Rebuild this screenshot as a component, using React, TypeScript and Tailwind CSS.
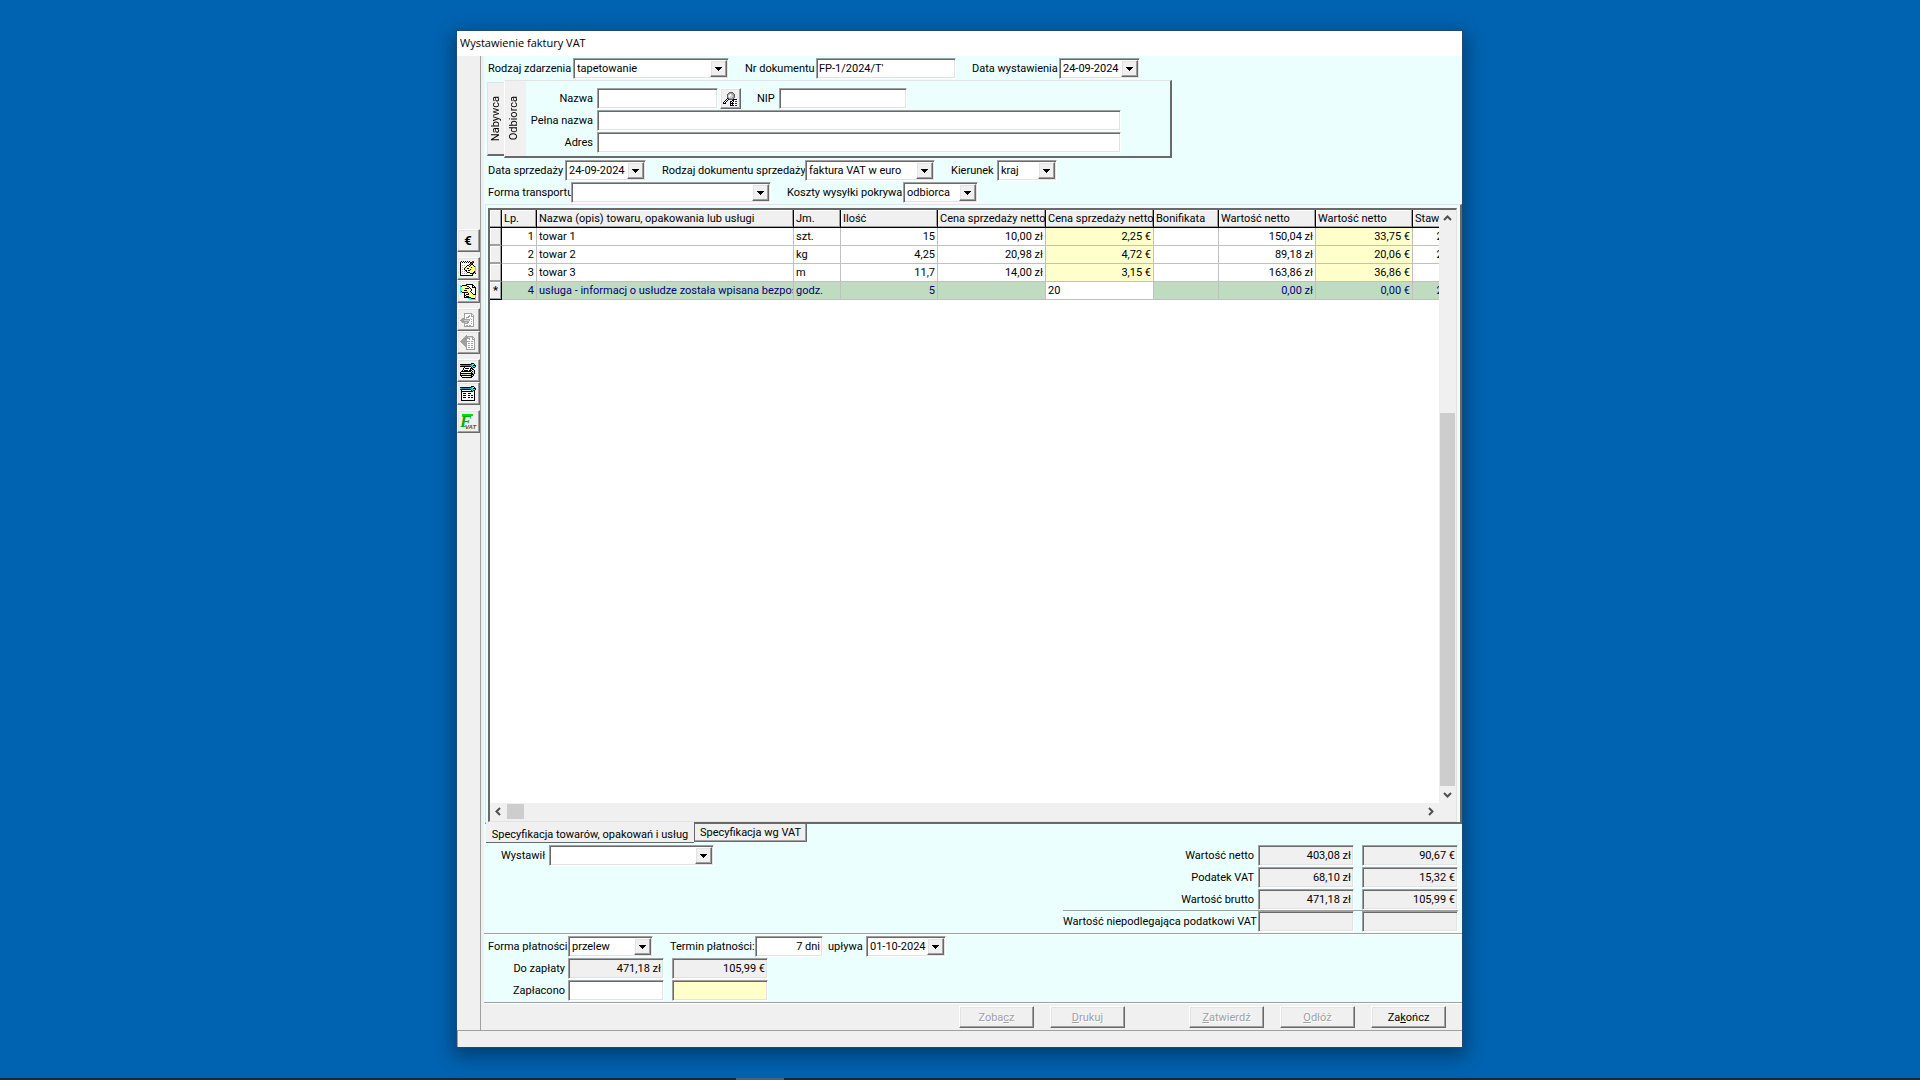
import type { ReactNode } from 'react'

const COLORS: Record<string, string> = {
  K: '#000000',
  W: '#ffffff',
  C: '#00ffff',
  Y: '#ffff80',
  O: '#c0a020',
  R: '#a02020',
  G: '#a0a0a0',
  L: '#d0d0d0',
  B: '#2020c0',
  D: '#606060',
  T: '#2090b0',
}

const NOTE = [
  '.K.K.K.K.K..RR..',
  'KWKWKWKWKWKKRK..',
  'KWWWWWWWWWKRK...',
  'KWWWWWWWWKOKK...',
  'KWCWCWWKKYKYYK..',
  'KWWWWWKYYKYYYYKC',
  'KWCWWKYYYYYKYYYC',
  'KWWWKYYKKYYYYYYC',
  'KWCWKYYYYYKYYYYC',
  'KWWWWKKYKKYYYYYC',
  'KWCWCWKYYYYYYYKC',
  'KWWWWWWKKKYYYKKC',
  'KWCWCWCWWWKKKK.K',
  'KWWWWWWWWWWWK...',
  'KKKKKKKKKKKKK...',
]

const HAND = [
  '......KKKKKKK...',
  'C.KKKKKWWWWWKK..',
  'CKYYYYYKKWWWKWK.',
  'CYYYYYYYYKWWKKKK',
  'CYYYYKKKKYKWWWWK',
  'CYYYYYYYYYYKWWWK',
  'CYYYKKKYYYYKWWWK',
  'CKYYYYYYYYKWWWWK',
  'C.KKKKKKYYYKWWWK',
  '....KWWWKYYYKWWK',
  '....KWKKKYYYYKKK',
  '....KKYYYYYYYYYC',
  '....KWKKKYYYYYYC',
  '....KKKKKKKYYYYC',
  '........CCCKKKKC',
  '.........CCCCCCC',
]

const IMPORT = [
  '....GGGGGGGG....',
  '....GWWWWWWGG...',
  '....GWWWWGWGWG..',
  '....GWWWGGWGGG..',
  '....GWGGGWWWWG..',
  '..GGGWLWWWLWWG..',
  '.GGGGGGGGGWGWG..',
  'GGGGLLLLLGWWWG..',
  '.GGGGGGGGWWGWG..',
  '..GGGLLGGWWWWG..',
  '....GGGGWWWGWG..',
  '....GWWWWWWWWG..',
  '....GWGGWGGWWG..',
  '....GGGGGGGGGG..',
]

const BACK = [
  '......G.........',
  '.....GGGGGGGG...',
  '....GGGGLLLLGG..',
  '...GGGGGGGWWGWG.',
  '..GGGGGWWGWWGGG.',
  '.GGGGGGWWWWWWWG.',
  'GGGGGGGGGGWGGWG.',
  '.GGGGGGWWWWWWWG.',
  '..GGGGGWGGWGGWG.',
  '...GGGGWWWWWWWG.',
  '....GGGWGGWGGWG.',
  '.....GGWWWWWWWG.',
  '......GWGGWGGWG.',
  '......GWWWWWWWG.',
  '......GGGGGGGGG.',
]

const PRINTER = [
  '...........KKK..',
  'KKKKKKKKKKKTC.K.',
  'CTTTTTTTTTCTCKKK',
  'KKKKKKKKKKKCTCCK',
  '....KWWWWWWKCKK.',
  '...KWKKKKWKKK...',
  '...KWWWWWWK.KK..',
  '..KWKKKKWKKKWLK.',
  '.KKKKKKKKKKWKLK.',
  'KWWWWWWWWWWKLLK.',
  'KKKKKKKKKKKKKLK.',
  'KLLLLLLYYLLKKK..',
  'KKKKKKKKKKKKLK..',
  '.KWWWWWWWWLKK...',
  '..KKKKKKKKKK....',
]

const LIST = [
  '...........KKK..',
  'KKKKKKKKKKKTC.K.',
  'CTTTTTTTTTCTCKKK',
  'KKKKKKKKKKKCTCCK',
  '.KWWWWWWWWWKCKK.',
  '.KKKKKKKKKKKKWK.',
  '.KWWWWWWWWWWWWK.',
  '.KWKKKWWKKKWWWK.',
  '.KWWWWWWWWWWWWK.',
  '.KWKKKWWKKWKKWK.',
  '.KWWWWWWWWWWWWK.',
  '.KWKKKWWKKWKKWK.',
  '.KWWWWWWWWWWWWK.',
  '.KWWWWWWWWWWWWK.',
  '.KKKKKKKKKKKKKK.',
]

const SEARCH = [
  '......DDDD......',
  '.....DGGGGD.....',
  '....DGLWLGGD....',
  '....DLWWLLGD....',
  '....DLWLLLGD....',
  '....DGLLLGGD....',
  '....KDGGGGD.....',
  '...KWKDDDDKKKK..',
  '..KWK....KKWWW..',
  '.KWK...KKWKWBB..',
  'KWK....KWKWWWW..',
  'KKK....KKKKWBB..',
  '.......KWKWWWW..',
  '.......KKKKWBB..',
]

function PixelIcon({ rows }: { rows: string[] }) {
  return (
    <svg width="16" height={rows.length} viewBox={`0 0 16 ${rows.length}`} shapeRendering="crispEdges" aria-hidden="true">
      {rows.flatMap((row, y) =>
        row.split('').map((c, x) =>
          c === '.' ? null : <rect key={`${x}-${y}`} x={x} y={y} width="1" height="1" fill={COLORS[c]} />,
        ),
      )}
    </svg>
  )
}

const SUNKEN =
  'border border-t-[#a0a0a0] border-l-[#a0a0a0] border-r-white border-b-white shadow-[inset_1px_1px_0_#696969,inset_-1px_-1px_0_#e3e3e3]'
const RAISED =
  'border border-t-white border-l-white border-r-[#696969] border-b-[#696969] shadow-[inset_-1px_-1px_0_#a0a0a0,inset_1px_1px_0_#e3e3e3]'

function Label({ id, width, children }: { id: string; width?: string; children: ReactNode }) {
  return (
    <label htmlFor={id} className={`shrink-0 pt-px whitespace-nowrap ${width ?? ''}`}>
      {children}
    </label>
  )
}

function Select({ id, width, value }: { id: string; width: string; value: string }) {
  return (
    <span className={`relative block h-[21px] shrink-0 bg-white ${SUNKEN} ${width}`}>
      <select id={id} defaultValue={value} className="block h-full w-full appearance-none bg-transparent pt-px pl-[3px] outline-none">
        <option value={value}>{value}</option>
      </select>
      <span className={`pointer-events-none absolute top-px right-px bottom-px flex w-[17px] items-center justify-center bg-[#f0f0f0] ${RAISED}`}>
        <svg width="7" height="4" viewBox="0 0 7 4" shapeRendering="crispEdges" aria-hidden="true">
          <path d="M0 0h7v1H0zM1 1h5v1H1zM2 2h3v1H2zM3 3h1v1H3z" />
        </svg>
      </span>
    </span>
  )
}

type FieldProps = { id: string; width: string; value?: string; bg?: string; right?: boolean; readOnly?: boolean; label?: string }

function Field({ id, width, value = '', bg = 'bg-white', right, readOnly, label }: FieldProps) {
  return (
    <input
      id={id}
      type="text"
      defaultValue={value}
      readOnly={readOnly}
      aria-label={label}
      className={`block h-[21px] px-[2px] pb-px outline-none ${right ? 'text-right' : ''} ${SUNKEN} ${bg} ${width}`}
    />
  )
}

function ToolButton({ label, disabled, children }: { label: string; disabled?: boolean; children: ReactNode }) {
  return (
    <button
      type="button"
      aria-label={label}
      disabled={disabled}
      className={`flex h-[23px] w-[23px] items-center justify-center bg-[#f0f0f0] pr-px ${RAISED}`}
    >
      {children}
    </button>
  )
}

function Toolbar() {
  return (
    <div role="toolbar" className="flex w-6 shrink-0 flex-col gap-[5px] border-r border-[#a0a0a0] pt-[173px]">
      <ToolButton label="Waluta">
        <span className="text-[13px] leading-4 font-bold">€</span>
      </ToolButton>
      <div>
        <ToolButton label="Edytuj pozycję"><PixelIcon rows={NOTE} /></ToolButton>
        <ToolButton label="Wybierz pozycję"><PixelIcon rows={HAND} /></ToolButton>
      </div>
      <div>
        <ToolButton label="Wczytaj dokument" disabled><PixelIcon rows={IMPORT} /></ToolButton>
        <ToolButton label="Cofnij dokument" disabled><PixelIcon rows={BACK} /></ToolButton>
      </div>
      <div>
        <ToolButton label="Ustawienia wydruku"><PixelIcon rows={PRINTER} /></ToolButton>
        <ToolButton label="Ustawienia listy"><PixelIcon rows={LIST} /></ToolButton>
      </div>
      <ToolButton label="Faktura VAT">
        <svg width="18" height="17" viewBox="0 0 18 17" aria-hidden="true">
          <path d="M3 1h11v2H3z" fill="#00e000" />
          <text x="1" y="14" fontSize="17" fontWeight="bold" fontStyle="italic" fontFamily="Liberation Serif, serif" fill="#00b000">F</text>
          <text x="6" y="16" fontSize="6" fontWeight="bold" fontStyle="italic" fontFamily="Liberation Sans, sans-serif" fill="#705000">VAT</text>
        </svg>
      </ToolButton>
    </div>
  )
}

function PartyPanel() {
  return (
    <div className="mx-[3px] mt-px flex h-[78px] max-w-[685px]">
      <div role="tablist" className="flex">
        <button
          type="button"
          role="tab"
          aria-selected="false"
          className="my-[2px] flex w-[17px] items-center justify-end border-t border-b-2 border-l border-t-[#e3e3e3] border-b-[#696969] border-l-[#e3e3e3] bg-[#f0f0f0]"
        >
          <span className="rotate-180 [writing-mode:vertical-rl]">Nabywca</span>
        </button>
        <button
          type="button"
          role="tab"
          aria-selected="true"
          className="flex w-[22px] items-center border-t border-b-2 border-l border-t-[#e3e3e3] border-b-[#696969] border-l-white bg-[#f0f0f0] pl-px"
        >
          <span className="rotate-180 [writing-mode:vertical-rl]">Odbiorca</span>
        </button>
      </div>
      <div className="flex flex-1 flex-col gap-px border-t border-r-2 border-b-2 border-t-[#e3e3e3] border-r-[#696969] border-b-[#696969] pt-[7px]">
        <div className="flex h-[21px] items-center">
          <Label id="nazwa" width="w-[71px] pr-1 text-right">Nazwa</Label>
          <Field id="nazwa" width="w-[121px]" />
          <button type="button" aria-label="Szukaj" className={`ml-[2px] flex h-[21px] w-[21px] items-center justify-center bg-[#f0f0f0] ${RAISED}`}>
            <PixelIcon rows={SEARCH} />
          </button>
          <Label id="nip" width="ml-4 w-[22px]">NIP</Label>
          <Field id="nip" width="w-[128px]" />
        </div>
        <div className="flex h-[21px] items-center pr-[49px]">
          <Label id="pelna" width="w-[71px] pr-1 text-right">Pełna nazwa</Label>
          <Field id="pelna" width="flex-1" />
        </div>
        <div className="flex h-[21px] items-center pr-[49px]">
          <Label id="adres" width="w-[71px] pr-1 text-right">Adres</Label>
          <Field id="adres" width="flex-1" />
        </div>
      </div>
    </div>
  )
}

function HeaderForm() {
  return (
    <div className="pt-[2px]">
      <div className="flex items-center px-1">
        <Label id="rodzaj" width="w-[85px]">Rodzaj zdarzenia</Label>
        <Select id="rodzaj" width="w-[156px]" value="tapetowanie" />
        <Label id="nr" width="ml-4 w-[71px]">Nr dokumentu</Label>
        <Field id="nr" width="w-[140px]" value="FP-1/2024/T'" />
        <Label id="data" width="ml-4 w-[87px]">Data wystawienia</Label>
        <Select id="data" width="w-[81px]" value="24-09-2024" />
      </div>
      <PartyPanel />
      <div className="mt-[2px] flex items-center px-1">
        <Label id="sprzedaz" width="w-[77px]">Data sprzedaży</Label>
        <Select id="sprzedaz" width="w-[81px]" value="24-09-2024" />
        <Label id="dokument" width="ml-4 w-[143px]">Rodzaj dokumentu sprzedaży</Label>
        <Select id="dokument" width="w-[130px]" value="faktura VAT w euro" />
        <Label id="kierunek" width="ml-4 w-[46px]">Kierunek</Label>
        <Select id="kierunek" width="w-[60px]" value="kraj" />
      </div>
      <div className="mt-px flex items-center px-1">
        <Label id="transport" width="w-[83px]">Forma transportu</Label>
        <Select id="transport" width="w-[200px]" value="" />
        <Label id="koszty" width="ml-4 w-[116px]">Koszty wysyłki pokrywa</Label>
        <Select id="koszty" width="w-[75px]" value="odbiorca" />
      </div>
    </div>
  )
}

const COLUMNS = [
  { title: '', width: 'w-3' },
  { title: 'Lp.', width: 'w-[35px]' },
  { title: 'Nazwa (opis) towaru, opakowania lub usługi', width: 'w-[257px]' },
  { title: 'Jm.', width: 'w-[47px]' },
  { title: 'Ilość', width: 'w-[97px]' },
  { title: 'Cena sprzedaży netto', width: 'w-[108px]' },
  { title: 'Cena sprzedaży netto', width: 'w-[108px]' },
  { title: 'Bonifikata', width: 'w-[65px]' },
  { title: 'Wartość netto', width: 'w-[97px]' },
  { title: 'Wartość netto', width: 'w-[97px]' },
  { title: 'Stawka', width: 'w-[47px]' },
]

const ITEMS = [
  ['1', 'towar 1', 'szt.', '15', '10,00 zł', '2,25 €', '', '150,04 zł', '33,75 €', '23%'],
  ['2', 'towar 2', 'kg', '4,25', '20,98 zł', '4,72 €', '', '89,18 zł', '20,06 €', '23%'],
  ['3', 'towar 3', 'm', '11,7', '14,00 zł', '3,15 €', '', '163,86 zł', '36,86 €', '8%'],
  ['4', 'usługa - informacj o usłudze została wpisana bezpośr', 'godz.', '5', '', '20', '', '0,00 zł', '0,00 €', '23%'],
]

function cellBackground(active: boolean, col: number) {
  if (active) return ''
  return col === 5 || col === 8 ? 'bg-[#ffffcc]' : ''
}

function ItemsTable() {
  return (
    <table className="w-[970px] table-fixed border-separate border-spacing-0">
      <thead>
        <tr>
          {COLUMNS.map((c, i) => (
            <th
              key={i}
              className={`h-[18px] overflow-hidden border-r border-b border-black bg-[#f0f0f0] p-0 pt-px pl-[2px] text-left leading-4 font-normal whitespace-nowrap shadow-[inset_-1px_-1px_0_#a0a0a0,inset_1px_1px_0_#ffffff] ${c.width}`}
            >
              {c.title}
            </th>
          ))}
        </tr>
      </thead>
      <tbody>
        {ITEMS.map((row, r) => {
          const active = r === 3
          return (
            <tr key={row[0]} className={active ? 'bg-[#c0dcc0] text-[#000080]' : ''}>
              <td
                className={`h-[18px] border-r border-b border-r-black bg-[#f0f0f0] p-0 pt-px text-center leading-4 font-bold text-black shadow-[inset_-1px_-1px_0_#a0a0a0,inset_1px_1px_0_#ffffff] ${active ? 'border-b-black' : 'border-b-[#a0a0a0]'}`}
              >
                {active ? '*' : ''}
              </td>
              {row.map((text, c) =>
                active && c === 5 ? (
                  <td key={c} className="h-[18px] border-r border-b border-[#c0c0c0] bg-white p-0 pt-px text-black">
                    <input type="text" defaultValue={text} aria-label="Cena sprzedaży netto" className="block h-4 w-full pl-[2px] outline-none" />
                  </td>
                ) : (
                  <td
                    key={c}
                    className={`h-[18px] overflow-hidden border-r border-b border-[#c0c0c0] p-0 px-[2px] pt-px leading-4 whitespace-nowrap ${c === 1 || c === 2 ? '' : 'text-right'} ${cellBackground(active, c)}`}
                  >
                    {text}
                  </td>
                ),
              )}
            </tr>
          )
        })}
      </tbody>
    </table>
  )
}

function Chevron({ d }: { d: string }) {
  return (
    <svg width="9" height="9" viewBox="0 0 9 9" fill="none" stroke="#505050" strokeWidth="2" aria-hidden="true">
      <path d={d} />
    </svg>
  )
}

function ItemsPanel() {
  return (
    <div className="ml-px flex min-h-0 flex-1 flex-col border-t border-r-2 border-b-2 border-l border-t-[#e3e3e3] border-r-[#696969] border-b-[#696969] border-l-[#e3e3e3] pt-[3px] pr-[3px] pl-[2px]">
      <div className="flex min-h-0 flex-1 flex-col border-t-2 border-r border-b border-l-2 border-t-[#696969] border-r-[#e3e3e3] border-b-[#e3e3e3] border-l-[#696969] bg-[#f0f0f0]">
        <div className="flex min-h-0 flex-1">
          <div className="min-w-0 flex-1 overflow-hidden bg-white">
            <ItemsTable />
          </div>
          <div className="flex w-[17px] shrink-0 flex-col items-center">
            <div className="flex h-[17px] items-center">
              <Chevron d="M1 6l3.500-3.500L8 6" />
            </div>
            <div className="flex-[186]" />
            <div className="w-[15px] flex-[373] bg-[#cdcdcd]" />
            <div className="flex h-[17px] items-center">
              <Chevron d="M1 3l3.500 3.500L8 3" />
            </div>
          </div>
        </div>
        <div className="flex h-[18px] shrink-0 items-start pt-px pr-[17px]">
          <div className="flex h-[15px] w-[17px] items-center justify-center">
            <Chevron d="M6 1L2.500 4.500 6 8" />
          </div>
          <div className="h-[15px] w-[17px] bg-[#cdcdcd]" />
          <div className="flex-1" />
          <div className="flex h-[15px] w-[17px] items-center justify-center">
            <Chevron d="M3 1l3.500 3.500L3 8" />
          </div>
        </div>
      </div>
    </div>
  )
}

function SheetTabs() {
  return (
    <div role="tablist" className="relative -mt-[2px] ml-[2px] flex h-[21px] items-start">
      <button type="button" role="tab" aria-selected="true" className="h-[21px] w-[208px] border-b border-[#696969] bg-[#f0f0f0] pt-[5px] leading-[15px] whitespace-nowrap">
        Specyfikacja towarów, opakowań i usług
      </button>
      <button
        type="button"
        role="tab"
        aria-selected="false"
        className="mt-px h-[19px] w-[113px] border border-[#696969] bg-[#f0f0f0] leading-4 whitespace-nowrap shadow-[inset_-1px_-1px_0_#a0a0a0]"
      >
        Specyfikacja wg VAT
      </button>
    </div>
  )
}

const TOTALS = [
  { id: 'netto', label: 'Wartość netto', pln: '403,08 zł', eur: '90,67 €' },
  { id: 'vat', label: 'Podatek VAT', pln: '68,10 zł', eur: '15,32 €' },
  { id: 'brutto', label: 'Wartość brutto', pln: '471,18 zł', eur: '105,99 €' },
  { id: 'bez', label: 'Wartość niepodlegająca podatkowi VAT', pln: '', eur: '' },
]

function Summary() {
  return (
    <div className="flex h-[90px] items-start justify-between pt-[2px] pr-1 pl-[17px]">
      <div className="flex items-center">
        <Label id="wystawil" width="w-12">Wystawił</Label>
        <Select id="wystawil" width="w-[165px]" value="" />
      </div>
      <div>
        {TOTALS.map((t, i) => (
          <div key={t.id}>
            {i > 0 && <div className={i === 3 ? 'h-px bg-[#a0a0a0]' : 'h-px'} />}
            <div className="flex items-center">
              <Label id={t.id} width="w-[195px] pr-1 text-right">{t.label}</Label>
              <Field id={t.id} width="w-24" value={t.pln} bg="bg-[#f0f0f0]" right readOnly />
              <span className="w-2" />
              <Field id={`${t.id}-eur`} label={`${t.label} euro`} width="w-24" value={t.eur} bg="bg-[#f0f0f0]" right readOnly />
            </div>
          </div>
        ))}
      </div>
    </div>
  )
}

function Payment() {
  return (
    <div className="flex h-[69px] flex-col gap-px border-t border-[#a0a0a0] px-1 pt-[2px] shadow-[inset_0_1px_0_#ffffff]">
      <div className="flex items-center">
        <Label id="forma" width="w-20 pr-[3px] text-right">Forma płatności</Label>
        <Select id="forma" width="w-[85px]" value="przelew" />
        <Label id="termin" width="ml-[17px] w-[85px]">Termin płatności:</Label>
        <Field id="termin" width="w-[68px]" value="7 dni" right />
        <Label id="uplywa" width="ml-[5px] w-[38px]">upływa</Label>
        <Select id="uplywa" width="w-[80px]" value="01-10-2024" />
      </div>
      <div className="flex items-center">
        <Label id="dozaplaty" width="w-20 pr-[3px] text-right">Do zapłaty</Label>
        <Field id="dozaplaty" width="w-24" value="471,18 zł" bg="bg-[#f0f0f0]" right readOnly />
        <span className="w-2" />
        <Field id="dozaplaty-eur" label="Do zapłaty euro" width="w-24" value="105,99 €" bg="bg-[#f0f0f0]" right readOnly />
      </div>
      <div className="flex items-center">
        <Label id="zaplacono" width="w-20 pr-[3px] text-right">Zapłacono</Label>
        <Field id="zaplacono" width="w-24" right />
        <span className="w-2" />
        <Field id="zaplacono-eur" label="Zapłacono euro" width="w-24" bg="bg-[#ffffcc]" right />
      </div>
    </div>
  )
}

function ActionButton({ disabled, children }: { disabled?: boolean; children: ReactNode }) {
  return (
    <button
      type="button"
      disabled={disabled}
      className={`h-[22px] w-[75px] bg-[#f0f0f0] pt-px disabled:text-[#a0a0a0] disabled:[text-shadow:1px_1px_0_#ffffff] ${RAISED}`}
    >
      {children}
    </button>
  )
}

function Actions() {
  return (
    <div className="flex h-[28px] justify-end gap-4 border-t border-[#a0a0a0] bg-[#f0f0f0] pt-[3px] pr-4 shadow-[inset_0_1px_0_#ffffff]">
      <ActionButton disabled>Zoba<u>c</u>z</ActionButton>
      <ActionButton disabled><u>D</u>rukuj</ActionButton>
      <div className="w-8" />
      <ActionButton disabled><u>Z</u>atwierdź</ActionButton>
      <ActionButton disabled><u>O</u>dłóż</ActionButton>
      <ActionButton>Za<u>k</u>ończ</ActionButton>
    </div>
  )
}

function App() {
  return (
    <div className="flex h-screen min-h-[640px] flex-col bg-[#0063b1] font-['Roboto','Liberation_Sans',sans-serif] text-[11px] leading-4 text-black">
      <div className="flex min-h-0 flex-1 justify-center py-[31px] pr-px">
        <div className="flex w-full max-w-[1005px] flex-col bg-[#f0f0f0] shadow-[0_0_0_1px_#1a4a75,0_6px_18px_4px_rgba(0,0,0,0.35)]">
          <h1 className="h-[25px] shrink-0 bg-white pl-[3px] font-['Open_Sans','Noto_Sans',sans-serif] text-[11px] leading-6">
            Wystawienie faktury VAT
          </h1>
          <div className="flex min-h-0 flex-1">
            <Toolbar />
            <main className="ml-[3px] flex min-w-0 flex-1 flex-col bg-[#ebffff]">
              <HeaderForm />
              <div className="h-px shrink-0" />
              <ItemsPanel />
              <SheetTabs />
              <Summary />
              <Payment />
              <Actions />
            </main>
          </div>
          <div className="h-[17px] shrink-0 border-t border-l border-[#a0a0a0]" />
        </div>
      </div>
      <div className="flex h-[2px] w-full shrink-0 bg-[#1c2733] pl-[736px]">
        <div className="w-12 bg-[#50606e]" />
      </div>
    </div>
  )
}

export default App
